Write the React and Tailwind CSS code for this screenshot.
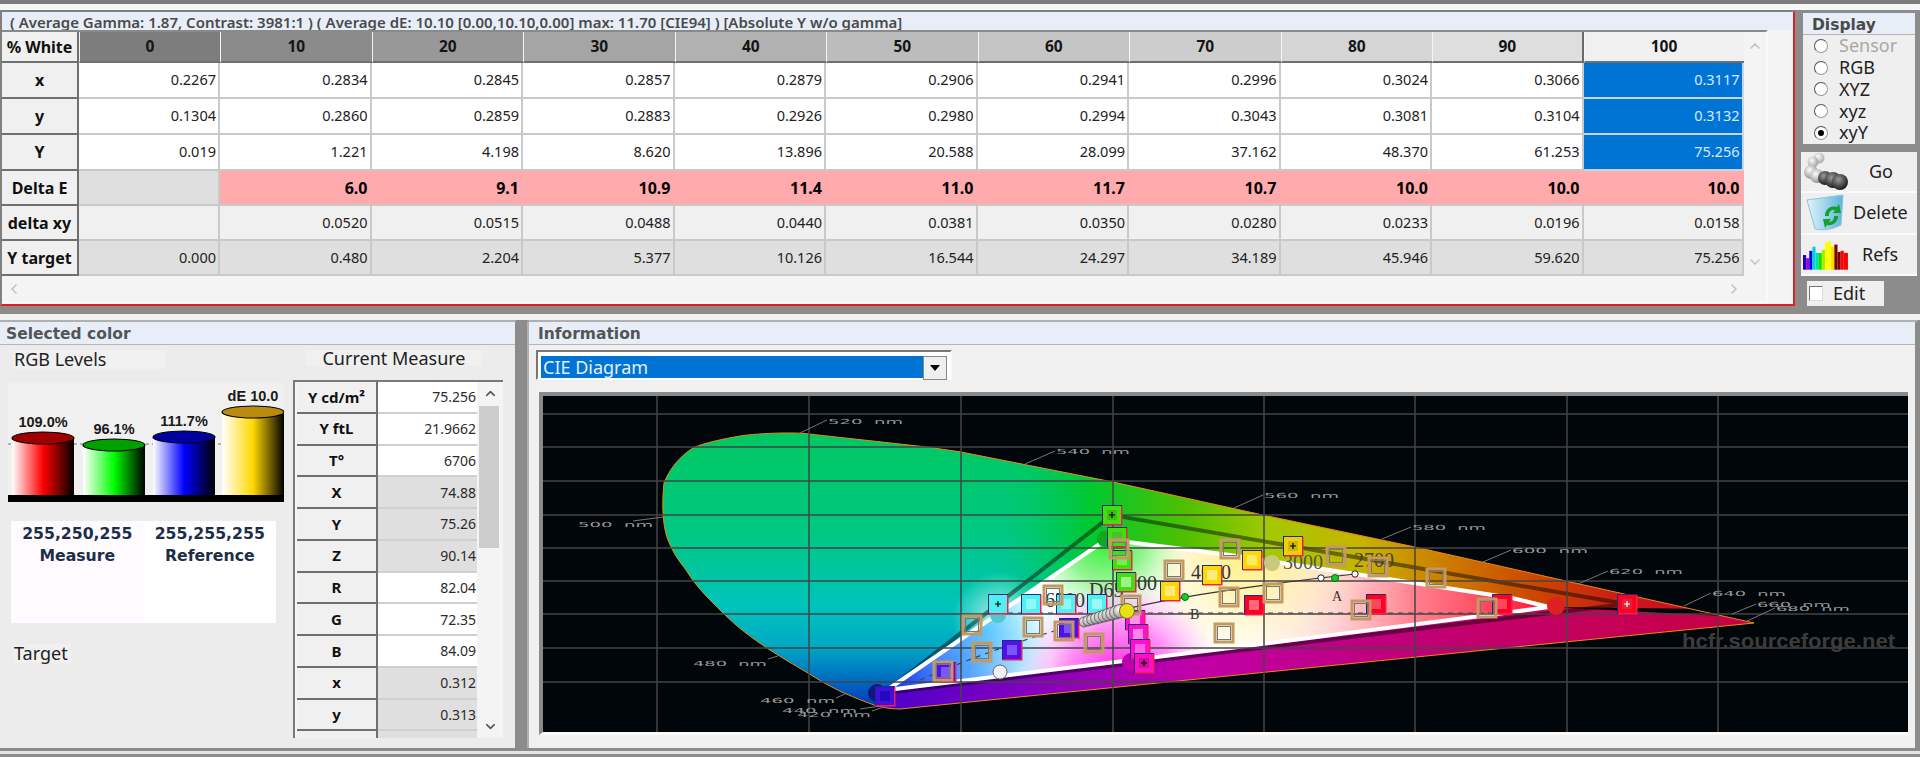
import React from "react";
import { ChevronUp, ChevronDown, ChevronLeft, ChevronRight } from "lucide-react";

const heads = ["0","10","20","30","40","50","60","70","80","90","100"];
const headBg = ["bg-[#7d7d7d]","bg-[#8b8b8b]","bg-[#989898]","bg-[#a5a5a5]","bg-[#b1b1b1]","bg-[#bcbcbc]","bg-[#c5c5c5]","bg-[#cdcdcd]","bg-[#d5d5d5]","bg-[#dedede]","bg-[#f0f0f0]"];
const rows = [
  { k: "x", h: "h-[36px]", t: "white", v: ["0.2267","0.2834","0.2845","0.2857","0.2879","0.2906","0.2941","0.2996","0.3024","0.3066","0.3117"] },
  { k: "y", h: "h-[36px]", t: "white", v: ["0.1304","0.2860","0.2859","0.2883","0.2926","0.2980","0.2994","0.3043","0.3081","0.3104","0.3132"] },
  { k: "Y", h: "h-[36px]", t: "white", v: ["0.019","1.221","4.198","8.620","13.896","20.588","28.099","37.162","48.370","61.253","75.256"] },
  { k: "Delta E", h: "h-[35px]", t: "de", v: ["","6.0","9.1","10.9","11.4","11.0","11.7","10.7","10.0","10.0","10.0"] },
  { k: "delta xy", h: "h-[35px]", t: "light", v: ["","0.0520","0.0515","0.0488","0.0440","0.0381","0.0350","0.0280","0.0233","0.0196","0.0158"] },
  { k: "Y target", h: "h-[35px]", t: "grey", v: ["0.000","0.480","2.204","5.377","10.126","16.544","24.297","34.189","45.946","59.620","75.256"] },
];
const cols = "grid grid-cols-[77px_141px_repeat(9,151.5px)_160px]";

function cellClass(t, i, col) {
  const base = "flex items-center justify-end pr-[2px] text-[14.5px] border-r-2 border-b-2 border-[#c9c9c9] ";
  if (t === "white") {
    if (col === 10) return base + "bg-[#0074d4] text-[#d9e9fb] border-[#c9d6e2]";
    return base + "bg-white text-[#222]";
  }
  if (t === "de") {
    if (col === 0) return base + "bg-[#dfdfdf]";
    return base + "bg-[#ffabae] text-black font-bold text-[16px] border-r-[#ffabae]";
  }
  if (t === "light") return base + "bg-[#f0f0f0] text-[#222]";
  return base + "bg-[#dfdfdf] text-[#222]";
}

function MainTable() {
  return (
    <div className="flex-1 flex flex-col border-t-2 border-l-2 border-[#808080] bg-[#f4f4f4] border-r-2 border-r-[#e02020] border-b-2 border-b-[#e02020] rounded-tr-[3px]">
      <div className="h-[18px] bg-[#e7eef8] pl-[8px] text-[15px] font-semibold text-[#4a4a4a] leading-[21px] whitespace-nowrap">
        ( Average Gamma: 1.87, Contrast: 3981:1 ) ( Average dE: 10.10 [0.00,10.10,0.00] max: 11.70 [CIE94] ) [Absolute Y w/o gamma]
      </div>
      <div className="flex-1 flex flex-col w-[1766px] border-t-2 border-[#8a8a8a] border-r-2 border-r-[#fafafa] border-b-2 border-b-[#fafafa]">
        <div className="flex">
          <div className="w-[1741px] shrink-0">
            <div className={cols + " h-[31px]"}>
              <div className="flex items-center justify-center bg-[#f0f0f0] border-b-2 border-r-2 border-[#6f6f6f] text-[16px] font-bold text-[#111]">% White</div>
              {heads.map((h, i) => (
                <div key={h} className={"flex items-center justify-center text-[15.5px] font-bold text-[#151515] border-l border-l-[#f5f5f5] border-b-2 border-b-[#6f6f6f] " + headBg[i] + (i === 9 ? " border-r-2 border-r-[#6a6a6a]" : "") + (i === 10 ? " border-b-0" : "")}>{h}</div>
              ))}
            </div>
            {rows.map((r) => (
              <div key={r.k} className={cols + " " + r.h}>
                <div className="flex items-center justify-center bg-[#f0f0f0] border-b-2 border-r-2 border-[#6f6f6f] text-[16px] font-bold text-[#111]">{r.k}</div>
                {r.v.map((v, c) => (
                  <div key={c} className={cellClass(r.t, c, c)}>{v}</div>
                ))}
              </div>
            ))}
          </div>
          <div className="flex-1 flex flex-col items-center justify-between py-[6px] text-[#c4c4c4]">
            <ChevronUp size={16} strokeWidth={2.5} />
            <ChevronDown size={16} strokeWidth={2.5} />
          </div>
        </div>
        <div className="flex-1 flex items-center justify-between pl-[4px] pr-[24px] text-[#c4c4c4]">
          <ChevronLeft size={16} strokeWidth={2.5} />
          <ChevronRight size={16} strokeWidth={2.5} />
        </div>
      </div>
    </div>
  );
}

function Radio({ label, checked, disabled }) {
  return (
    <div className="h-[21.75px] flex items-center pl-[11px] bg-[#efefef]">
      <span className="w-[14px] h-[14px] rounded-full bg-white border border-[#9a9a9a] border-l-[#555] border-t-[#555] flex items-center justify-center">
        {checked && <span className="w-[6px] h-[6px] rounded-full bg-black" />}
      </span>
      <span className={"ml-[11px] text-[18px] " + (disabled ? "text-[#a8a8a8]" : "text-[#222]")}>{label}</span>
    </div>
  );
}

function GoIcon() {
  return (
    <svg width="46" height="38" viewBox="0 0 46 38">
      <defs>
        <radialGradient id="gl" cx="0.4" cy="0.35" r="0.7"><stop offset="0" stopColor="#fff" /><stop offset="1" stopColor="#8a8a8a" /></radialGradient>
        <radialGradient id="gd" cx="0.4" cy="0.35" r="0.7"><stop offset="0" stopColor="#9a9a9a" /><stop offset="1" stopColor="#111" /></radialGradient>
      </defs>
      <circle cx="16" cy="6" r="5.5" fill="url(#gl)" opacity=".7" />
      <circle cx="10" cy="10" r="5.5" fill="url(#gl)" opacity=".8" />
      <circle cx="8" cy="20" r="7" fill="url(#gl)" />
      <circle cx="14" cy="24" r="7" fill="url(#gl)" />
      <circle cx="22" cy="26" r="7" fill="url(#gd)" />
      <circle cx="30" cy="28" r="8" fill="url(#gd)" />
      <circle cx="37" cy="30" r="8" fill="url(#gd)" />
    </svg>
  );
}
function DeleteIcon() {
  return (
    <svg width="42" height="38" viewBox="0 0 42 38">
      <defs><linearGradient id="bin" x1="0" x2="1"><stop offset="0" stopColor="#e4f4fb" /><stop offset="1" stopColor="#5cb4dc" /></linearGradient></defs>
      <path d="M2 6 L38 1 L36 31 Q22 38 10 35 Z" fill="url(#bin)" stroke="#8cc4dc" strokeWidth="1" />
      <path d="M20 22 a9 9 0 0 1 12 -9 l2 -3 l2 9 l-8 0 l2 -3 a5 5 0 0 0 -6 6 Z" fill="#12a22c" />
      <path d="M33 22 a9 9 0 0 1 -11 9 l-2 3 l-2 -9 l8 0 l-2 3 a5 5 0 0 0 5 -6 Z" fill="#12a22c" />
    </svg>
  );
}
function RefsIcon() {
  const bars = [[0,3,14,"#2000c0"],[3,3,11,"#a000d0"],[6,3,18,"#0000f0"],[9,3,22,"#00d0f0"],[12,3,16,"#00e0a0"],[15,3,16,"#10e000"],[18,3,19,"#a0f000"],[21,3,26,"#ffff00"],[24,3,27,"#ffff00"],[27,3,22,"#f0e000"],[30,3,24,"#800000"],[33,3,17,"#800000"],[36,3,18,"#ff0000"],[39,4,16,"#ff0000"]];
  return (
    <svg width="46" height="32" viewBox="0 0 44 30">
      {bars.map((b, i) => <rect key={i} x={b[0]} y={30 - b[2]} width={b[1]} height={b[2]} fill={b[3]} />)}
    </svg>
  );
}

function ActionBtn({ icon, label, labelCls, h }) {
  return (
    <div className={"flex items-center bg-[#efefef] border-b-2 border-[#fafafa] " + h}>
      <div className="w-[50px] flex justify-center shrink-0">{icon}</div>
      <div className={"flex-1 text-[18px] text-[#222] " + labelCls}>{label}</div>
    </div>
  );
}

function RightCol() {
  return (
    <div className="w-[122px] shrink-0 ml-[3px] bg-[#8c8c8c] px-[3px] pb-[1px] flex flex-col">
      <div className="mt-[1px] bg-[#f2f2f2] border-2 border-[#8c8c8c] rounded-tr-[4px] h-[136px] flex flex-col">
        <div className="h-[22px] bg-[#e7eef8] pl-[9px] font-['DejaVu_Sans'] font-bold text-[15.5px] text-[#4a4a4a] leading-[24px] border-b border-[#b5b5b5]">Display</div>
        <Radio label="Sensor" disabled />
        <Radio label="RGB" />
        <Radio label="XYZ" />
        <Radio label="xyz" />
        <Radio label="xyY" checked />
      </div>
      <div className="mt-[6px] flex flex-col">
        <ActionBtn h="h-[41px]" icon={<GoIcon />} label="Go" labelCls="pl-[18px]" />
        <ActionBtn h="h-[42px]" icon={<DeleteIcon />} label="Delete" labelCls="pl-[2px]" />
        <ActionBtn h="h-[41px]" icon={<RefsIcon />} label="Refs" labelCls="pl-[11px]" />
      </div>
      <div className="mt-[5px] ml-[6px] w-[77px] h-[25px] bg-[#efefef] flex items-center pl-[2px]">
        <span className="w-[14px] h-[15px] bg-white border border-[#777] border-r-[#ddd] border-b-[#ddd]" />
        <span className="ml-[10px] text-[18px] text-[#222]">Edit</span>
      </div>
    </div>
  );
}

function Cyl({ x, top, w, grad, cap }) {
  const bottom = 112;
  const rx = w / 2;
  return (
    <g>
      <rect x={x} y={top} width={w} height={bottom - top} fill={grad} />
      <ellipse cx={x + rx} cy={top} rx={rx} ry={6} fill={cap} stroke="#000" strokeWidth="1.2" />
    </g>
  );
}

function LevelsChart() {
  const L = ({ x, y, children }) => (
    <text x={x} y={y} textAnchor="middle" fontFamily="'Liberation Sans',sans-serif" fontWeight="700" fontSize="14.5" fill="#1a1a1a">{children}</text>
  );
  return (
    <svg width="276" height="120" viewBox="0 0 276 120" className="block bg-[#f0f0f0]">
      <defs>
        <linearGradient id="cr"><stop offset="0" stopColor="#fff" /><stop offset=".5" stopColor="#ff0000" /><stop offset="1" stopColor="#000" /></linearGradient>
        <linearGradient id="cg"><stop offset="0" stopColor="#fff" /><stop offset=".5" stopColor="#00ff00" /><stop offset="1" stopColor="#000" /></linearGradient>
        <linearGradient id="cb"><stop offset="0" stopColor="#fff" /><stop offset=".5" stopColor="#0000ff" /><stop offset="1" stopColor="#000" /></linearGradient>
        <linearGradient id="cy"><stop offset="0" stopColor="#fff" /><stop offset=".5" stopColor="#ffd800" /><stop offset="1" stopColor="#000" /></linearGradient>
      </defs>
      <line x1="0" x2="222" y1="61" y2="61" stroke="#777" strokeDasharray="3 3" />
      <Cyl x={4} top={55} w={62} grad="url(#cr)" cap="#a00000" />
      <Cyl x={75} top={62} w={62} grad="url(#cg)" cap="#00a000" />
      <Cyl x={145} top={54} w={62} grad="url(#cb)" cap="#0000a0" />
      <Cyl x={214} top={29} w={62} grad="url(#cy)" cap="#b88a10" />
      <rect x="0" y="112" width="276" height="7" fill="#000" />
      <L x={35} y={44}>109.0%</L>
      <L x={106} y={51}>96.1%</L>
      <L x={176} y={43}>111.7%</L>
      <L x={245} y={18}>dE 10.0</L>
    </svg>
  );
}

const measures = [
  ["Y cd/m²","75.256",0],["Y ftL","21.9662",0],["T°","6706",0],["X","74.88",1],["Y","75.26",1],["Z","90.14",1],
  ["R","82.04",0],["G","72.35",0],["B","84.09",0],["x","0.312",1],["y","0.313",1],["",'',1],
];

function SelectedColor() {
  return (
    <div className="w-[518px] shrink-0 bg-[#ececec] border-r-[3px] border-r-[#8c8c8c] border-t-2 border-t-[#b0b0b0] rounded-tr-[4px] flex flex-col">
      <div className="h-[23px] bg-[#e7eef8] pl-[6px] font-['DejaVu_Sans'] font-bold text-[15.5px] text-[#555] leading-[24px] border-b border-[#b5b5b5]">Selected color</div>
      <div className="flex-1 flex">
        <div className="w-[292px] shrink-0 pl-[8px] flex flex-col">
          <div className="mt-[5px] ml-[5px] w-[152px] h-[19px] bg-[#f0f0f0] pl-[1px] text-[18px] leading-[19px] text-[#222]">RGB Levels</div>
          <div className="mt-[14px]"><LevelsChart /></div>
          <div className="mt-[18px] ml-[3px] w-[265px] h-[102px] grid grid-cols-2 font-['DejaVu_Sans'] font-bold text-[#1c2f48] text-[15.7px] text-center leading-[22px]">
            <div className="bg-[#fffafe] pt-[2px]">255,250,255<br />Measure</div>
            <div className="bg-white pt-[2px]">255,255,255<br />Reference</div>
          </div>
          <div className="mt-[21px] ml-[5px] w-[58px] h-[19px] bg-[#f0f0f0] pl-[1px] text-[18px] leading-[19px] text-[#222]">Target</div>
        </div>
        <div className="flex-1 flex flex-col">
          <div className="mt-[5px] ml-[14px] w-[176px] h-[16px] bg-[#f0f0f0] text-center text-[18px] leading-[16px] text-[#222]">Current Measure</div>
          <div className="mt-[14px] ml-[1px] w-[210px] h-[358px] border-t-2 border-l-2 border-[#7a7a7a] bg-[#f4f4f4] flex overflow-hidden">
            <div className="w-[182px] shrink-0">
              {measures.map((m, i) => (
                <div key={i} className="flex h-[31.75px]">
                  <div className="w-[81px] ml-[2px] bg-[#f0f0f0] border-r-2 border-b-2 border-[#6f6f6f] flex items-center justify-center text-[15px] font-bold text-[#111]">{m[0]}</div>
                  <div className={"flex-1 pr-[1px] flex items-center justify-end text-[14px] text-[#2b2b2b] border-b-2 border-[#cfcfcf] " + (m[2] ? "bg-[#dfdfdf]" : "bg-white")}>{m[1]}</div>
                </div>
              ))}
            </div>
            <div className="flex-1 relative flex flex-col justify-between items-center py-[4px] text-[#555]">
              <ChevronUp size={15} strokeWidth={2.5} />
              <ChevronDown size={15} strokeWidth={2.5} />
              <div className="absolute left-[2px] right-[4px] top-[24px] h-[142px] bg-[#cdcdcd]" />
            </div>
          </div>
        </div>
      </div>
    </div>
  );
}

function Sq({ x, y, c, plus, inner = "#fff", io = 0.55 }) {
  return (
    <g>
      <rect x={x - 10} y={y - 10} width={20} height={20} fill="#1c2a80" />
      <rect x={x - 9} y={y - 9} width={19.5} height={19.5} fill="#f02050" />
      <rect x={x - 9} y={y - 9} width={18} height={18} fill={c} />
      <rect x={x - 5} y={y - 5} width={10} height={10} fill={inner} opacity={io} />
      {plus && <path d={`M${x - 3} ${y}H${x + 3}M${x} ${y - 3}V${y + 3}`} stroke={plus} strokeWidth="1.2" />}
    </g>
  );
}
function Tan({ x, y }) {
  return (
    <g fill="none">
      <rect x={x - 9} y={y - 9} width={18} height={18} stroke="#c49a62" strokeWidth="3" />
      <rect x={x - 6.5} y={y - 6.5} width={13} height={13} stroke="#777" strokeWidth="1" />
    </g>
  );
}

function CieChart() {
  const wave = [
    ["520  nm",828,424,75,798,434,827,420],["540  nm",1056,454,74,1025,464,1055,451],["500  nm",578,527,75,663,517,633,521],
    ["480  nm",693,666,74,778,656,768,659],["460  nm",760,703,75,847,693,836,698],["440  nm",782,713,75,880,706,860,709],
    ["420  nm",797,717,74,884,707,872,711],["560  nm",1264,498,75,1234,508,1263,495],["580  nm",1412,530,74,1382,539,1411,527],
    ["600  nm",1512,553,76,1483,562,1511,550],["620  nm",1609,574,74,1578,584,1608,571],["640  nm",1712,596,74,1684,606,1711,593],
    ["660  nm",1757,607,74,1732,614,1756,604],["680  nm",1776,611,74,1745,622,1775,608],
  ];
  const vx = [657,809,961,1113,1264,1415,1567,1718];
  const hz = [414,447,481,515,548,581,614,648,682];
  const horse = "M664 483 C662 500 662 525 668 540 C674 555 680 562 686 570 C697 588 710 600 722 612 C738 628 752 638 767 648 C785 660 800 668 816 678 C835 690 855 698 874 705 C885 708 892 709 900 709 L1754 623 L1566 581 L1415 547 L1263 515 L1113 482 L961 452 L927 447 L809 434 C795 432 760 433 740 436 C722 439 705 443 695 447 C685 452 671 465 664 483 Z";
  const tri = "887,690 1101,543 1128,542 1230,555 1362,575 1512,598 1549,607 1512,612 1230,648";
  const dots = [1084,1088,1092,1096,1100,1104,1108,1112,1116,1120];
  return (
    <svg viewBox="543 396 1365 336" className="block w-full h-full" preserveAspectRatio="none">
      <defs>
        <clipPath id="hs"><path d={horse} /></clipPath>
        <clipPath id="tr"><polygon points={tri} /></clipPath>
        <linearGradient id="base" gradientUnits="userSpaceOnUse" x1="0" x2="0" y1="430" y2="715">
          <stop offset="0" stopColor="#00c860" /><stop offset=".35" stopColor="#00c880" /><stop offset=".62" stopColor="#00c4bc" />
          <stop offset=".76" stopColor="#00a8c4" /><stop offset=".9" stopColor="#0060c0" /><stop offset="1" stopColor="#0028b8" />
        </linearGradient>
        <linearGradient id="upper" gradientUnits="userSpaceOnUse" x1="1000" x2="1750" y1="0" y2="0">
          <stop offset="0" stopColor="#00c860" stopOpacity="0" /><stop offset=".12" stopColor="#00c830" /><stop offset=".25" stopColor="#50c000" /><stop offset=".36" stopColor="#a4c800" />
          <stop offset=".48" stopColor="#c8b400" /><stop offset=".56" stopColor="#cc8c00" /><stop offset=".72" stopColor="#cc4400" /><stop offset=".84" stopColor="#c81818" /><stop offset="1" stopColor="#d0003c" />
        </linearGradient>
        <linearGradient id="lower" gradientUnits="userSpaceOnUse" x1="890" x2="1750" y1="0" y2="0">
          <stop offset="0" stopColor="#5000c8" /><stop offset=".15" stopColor="#8000c0" /><stop offset=".35" stopColor="#c000a8" /><stop offset=".6" stopColor="#c00078" /><stop offset="1" stopColor="#c80040" />
        </linearGradient>
        <radialGradient id="rgG"><stop offset="0" stopColor="#28f028" /><stop offset=".5" stopColor="#60f060" stopOpacity=".7" /><stop offset="1" stopColor="#a0ffa0" stopOpacity="0" /></radialGradient>
        <radialGradient id="rgB"><stop offset="0" stopColor="#1030f0" /><stop offset=".5" stopColor="#3890ff" stopOpacity=".8" /><stop offset="1" stopColor="#60b0ff" stopOpacity="0" /></radialGradient>
        <radialGradient id="rgR"><stop offset="0" stopColor="#ff1030" /><stop offset=".45" stopColor="#ff6070" stopOpacity=".8" /><stop offset="1" stopColor="#ffc0c0" stopOpacity="0" /></radialGradient>
        <radialGradient id="rgM"><stop offset="0" stopColor="#ff10e0" /><stop offset=".55" stopColor="#ff60f0" stopOpacity=".7" /><stop offset="1" stopColor="#ffa0ff" stopOpacity="0" /></radialGradient>
        <radialGradient id="rgY"><stop offset="0" stopColor="#fff070" /><stop offset=".5" stopColor="#fff0a0" stopOpacity=".6" /><stop offset="1" stopColor="#fff0c0" stopOpacity="0" /></radialGradient>
        <radialGradient id="rgC"><stop offset="0" stopColor="#70f0ff" /><stop offset="1" stopColor="#a0f8ff" stopOpacity="0" /></radialGradient>
        <radialGradient id="glow"><stop offset="0" stopColor="#e0fff0" stopOpacity=".8" /><stop offset="1" stopColor="#e0fff0" stopOpacity="0" /></radialGradient>
        <radialGradient id="ball" cx=".4" cy=".35" r=".7"><stop offset="0" stopColor="#fff" /><stop offset="1" stopColor="#888" /></radialGradient>
      </defs>
      <rect x="543" y="396" width="1365" height="336" fill="#000609" />
      <g clipPath="url(#hs)">
        <rect x="640" y="430" width="500" height="290" fill="url(#base)" />
        <polygon points="1000,430 1800,430 1800,610 1549,607 1101,543 1000,612" fill="url(#upper)" />
        <polygon points="887,690 1549,607 1800,620 1800,720 860,720" fill="url(#lower)" />
        <circle cx="1000" cy="620" r="48" fill="url(#glow)" />
        <polyline points="884,693 1112,515 1626,604 884,693" fill="none" stroke="#000" strokeOpacity=".45" strokeWidth="4" />
      </g>
      <g clipPath="url(#tr)">
        <rect x="880" y="535" width="680" height="160" fill="#fff" />
        <circle cx="1549" cy="607" r="300" fill="url(#rgR)" />
        <circle cx="1250" cy="548" r="120" fill="url(#rgY)" />
        <circle cx="1105" cy="540" r="80" fill="url(#rgG)" />
        <circle cx="985" cy="628" r="75" fill="url(#rgC)" />
        <circle cx="890" cy="690" r="165" fill="url(#rgB)" />
        <circle cx="1120" cy="680" r="100" fill="url(#rgM)" />
      </g>
      <polygon points={tri} fill="none" stroke="#fff" strokeWidth="4" />
      <path d={horse} fill="none" stroke="#e88a10" strokeWidth="1" />
      {hz.map((y) => <line key={y} x1="543" x2="1908" y1={y} y2={y} stroke="#444" strokeWidth="1.5" />)}
      {vx.map((x) => <line key={x} x1={x} x2={x} y1="396" y2="732" stroke="#444" strokeWidth="1.5" />)}
      {wave.map((w) => (
        <g key={w[0]}>
          <line x1={w[4]} y1={w[5]} x2={w[6]} y2={w[7]} stroke="#777" strokeWidth="1" />
          <text x={w[1]} y={w[2]} fontFamily="'DejaVu Sans',sans-serif" fontSize="7" fill="#999" textLength={w[3]} lengthAdjust="spacingAndGlyphs" xmlSpace="preserve">{w[0]}</text>
        </g>
      ))}
      <path d="M998 613 H1494" stroke="#444" strokeWidth="1.2" strokeDasharray="5 5" fill="none" />
      <path d="M920 680 Q1000 645 1083 623" stroke="#444" strokeWidth="1.2" strokeDasharray="5 5" fill="none" />
      <path d="M1122 610 Q1180 595 1320 578 L1355 574" stroke="#333" strokeWidth="1.2" fill="none" />
      <g fontFamily="'Liberation Serif',serif" fontSize="20" fill="#333">
        <text x="1045" y="607">6500</text>
        <text x="1089" y="597">D65</text>
        <text x="1117" y="590">5500</text>
        <text x="1191" y="579">4000</text>
        <text x="1283" y="569" fill="#555">3000</text>
        <text x="1354" y="567" fill="#443">2700</text>
        <text x="1332" y="601" fontSize="14">A</text>
        <text x="1190" y="619" fontSize="14">B</text>
      </g>
      {[[1105,539,8,"#10a820"],[877,693,9,"#101880"],[1131,662,9,"#c000b0"],[998,615,8,"#50c8d0"],[1272,563,8,"#c8c880"],[1556,606,9,"#e02020"]].map((c, i) => (
        <circle key={i} cx={c[0]} cy={c[1]} r={c[2]} fill={c[3]} />
      ))}
      <Sq x={885} y={696} c="#4010e0" inner="#1000a0" />
      <Sq x={1012} y={650} c="#5010f0" inner="#a090ff" />
      <Sq x={946} y={672} c="#5010f0" inner="#a090ff" />
      <Sq x={1069} y={628} c="#5010f0" inner="#a090ff" />
      <Sq x={998} y={604} c="#50f0f0" plus="#000" inner="#50f0f0" />
      <Sq x={1031} y={604} c="#50f0f0" inner="#c0ffff" />
      <Sq x={1066} y={604} c="#50f0f0" inner="#c0ffff" />
      <Sq x={1097} y={604} c="#50f0f0" inner="#e0ffff" />
      <Sq x={1112} y={515} c="#40e010" plus="#000" inner="#40a020" />
      <Sq x={1117} y={537} c="#40e010" inner="#60a040" />
      <Sq x={1122} y={560} c="#40e010" inner="#b0f090" />
      <Sq x={1126} y={582} c="#40e010" inner="#f0fff0" />
      <Sq x={1135} y={620} c="#ff10d0" inner="#ffffff" />
      <Sq x={1138} y={634} c="#ff10d0" inner="#ffe0f8" />
      <Sq x={1140} y={649} c="#ff10d0" inner="#ffa0f0" />
      <Sq x={1144} y={663} c="#ff10c0" plus="#000" inner="#a01090" />
      <Sq x={1170} y={591} c="#ffd800" inner="#fff8e0" />
      <Sq x={1212} y={575} c="#ffd800" inner="#fff8e0" />
      <Sq x={1252} y={560} c="#ffd800" inner="#fff8c0" />
      <Sq x={1293} y={546} c="#f0d000" plus="#000" inner="#b0a020" />
      <Sq x={1254} y={605} c="#ff0020" inner="#ffc0c8" />
      <Sq x={1376} y={604} c="#ff0020" inner="#ff8090" />
      <Sq x={1502} y={604} c="#ff0020" inner="#ff8090" />
      <Sq x={1627} y={604} c="#ff0020" plus="#fff" inner="#c04050" />
      {[[972,625],[982,652],[943,671],[1033,627],[1053,595],[1064,631],[1094,643],[1119,549],[1131,605],[1174,570],[1230,549],[1229,597],[1273,593],[1224,633],[1336,556],[1378,567],[1436,578],[1361,610],[1487,608]].map((t, i) => (
        <Tan key={i} x={t[0]} y={t[1]} />
      ))}
      {dots.map((x, i) => <circle key={x} cx={x} cy={622 - i * 1.2} r={5 + i * 0.2} fill="url(#ball)" stroke="#333" strokeWidth=".6" />)}
      <circle cx="1127" cy="611" r="7.5" fill="#e8e010" stroke="#707010" />
      <circle cx="1000" cy="672" r="7" fill="#f0f0f0" stroke="#666" />
      <circle cx="1185" cy="597" r="3.5" fill="#10d020" stroke="#063" />
      <circle cx="1321" cy="578" r="3.2" fill="#fff" stroke="#222" />
      <circle cx="1335" cy="578" r="3.5" fill="#10d020" stroke="#063" />
      <circle cx="1355" cy="574" r="3.2" fill="#fff" stroke="#222" />
      <text x="1682" y="648" fontFamily="'Liberation Sans',sans-serif" fontSize="21" fontWeight="700" fill="#3c3c3c" textLength="213" lengthAdjust="spacingAndGlyphs">hcfr.sourceforge.net</text>
    </svg>
  );
}

function Information() {
  return (
    <div className="flex-1 ml-[9px] bg-[#f0f0f0] border-t-2 border-l-2 border-[#b0b0b0] border-r-[5px] border-r-[#8c8c8c] flex flex-col rounded-tl-[3px]">
      <div className="h-[23px] bg-[#e7eef8] pl-[9px] font-['DejaVu_Sans'] font-bold text-[15.5px] text-[#555] leading-[24px] border-b border-[#b5b5b5]">Information</div>
      <div className="ml-[7px] mt-[5px] w-[416px] h-[30px] border-2 border-[#777] border-r-[#fafafa] border-b-[#fafafa] bg-white flex pt-[4px] px-[3px]">
        <div className="flex-1 h-[22px] bg-[#0074d4] text-[#e3effa] text-[18px] leading-[22px] pl-[2px]">CIE Diagram</div>
        <div className="w-[24px] h-[24px] bg-[#efefef] border border-[#888] flex items-center justify-center">
          <div className="w-0 h-0 border-l-[5px] border-r-[5px] border-t-[6px] border-l-transparent border-r-transparent border-t-black" />
        </div>
      </div>
      <div className="ml-[10px] mt-[12px] mr-[7px] h-[343px] border-t-[4px] border-l-[4px] border-[#8a8a8a] border-b-[3px] border-b-[#fafafa]">
        <CieChart />
      </div>
    </div>
  );
}

export default function App() {
  return (
    <div className="w-[1920px] h-[757px] overflow-hidden bg-[#8c8c8c] font-['Noto_Sans',sans-serif] flex flex-col">
      <div className="h-[4px] bg-[#7c7c7c] shrink-0" />
      <div className="h-[6px] bg-[#f6f6f6] shrink-0" />
      <div className="h-[296px] shrink-0 flex">
        <MainTable />
        <RightCol />
      </div>
      <div className="h-[8px] bg-[#8c8c8c] shrink-0" />
      <div className="h-[6px] bg-[#f2f2f2] shrink-0" />
      <div className="h-[428px] shrink-0 flex">
        <SelectedColor />
        <Information />
      </div>
      <div className="h-[3px] bg-[#8c8c8c] shrink-0" />
      <div className="h-[3px] bg-[#e4e4e4] shrink-0" />
      <div className="flex-1 bg-[#8c8c8c]" />
    </div>
  );
}
